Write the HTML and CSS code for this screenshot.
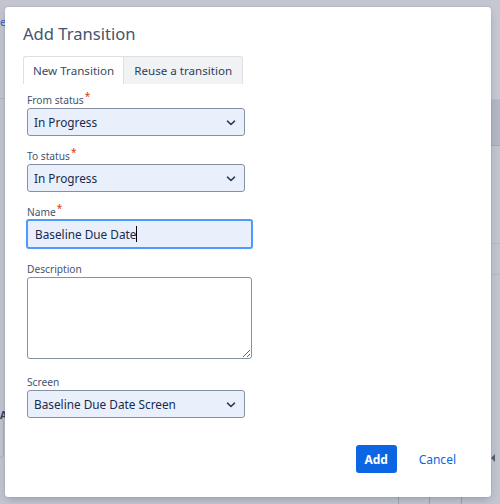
FILE: index.html
```html
<!DOCTYPE html>
<html lang="en">
<head>
<meta charset="utf-8">
<title>Add Transition</title>
<link rel="stylesheet" href="styles.css">
</head>
<body>
<div class="page">
  <div class="page-left">
    <span class="page-link">e</span>
    <div class="page-rule"></div>
    <div class="page-box"></div>
    <span class="page-label">A</span>
  </div>
  <div class="page-right">
    <div class="band band-a"></div>
    <div class="band band-b"></div>
    <div class="band band-c"></div>
    <div class="band band-d"></div>
  </div>
  <div class="page-bottom">
    <span class="col"></span><span class="col"></span><span class="col"></span>
  </div>
</div>

<div class="dialog" role="dialog" aria-labelledby="dlg-title">
  <h2 id="dlg-title" class="dialog-title">Add Transition</h2>

  <div class="tabs">
    <div class="tab tab-active">New Transition</div>
    <div class="tab">Reuse a transition</div>
  </div>

  <form class="form">
    <div class="field">
      <label class="label">From status<span class="req">*</span></label>
      <div class="select">
        <span>In Progress</span>
        <svg class="chev" width="10" height="6" viewBox="0 0 10 6"><path d="M1.5 1.2 5 4.5 8.5 1.2" fill="none" stroke="#2c3e5d" stroke-width="1.6" stroke-linecap="round" stroke-linejoin="round"/></svg>
      </div>
    </div>

    <div class="field">
      <label class="label">To status<span class="req">*</span></label>
      <div class="select">
        <span>In Progress</span>
        <svg class="chev" width="10" height="6" viewBox="0 0 10 6"><path d="M1.5 1.2 5 4.5 8.5 1.2" fill="none" stroke="#2c3e5d" stroke-width="1.6" stroke-linecap="round" stroke-linejoin="round"/></svg>
      </div>
    </div>

    <div class="field">
      <label class="label">Name<span class="req">*</span></label>
      <div class="input input-focus"><span>Baseline Due Date</span><span class="caret"></span></div>
    </div>

    <div class="field">
      <label class="label">Description</label>
      <textarea class="textarea"></textarea>
    </div>

    <div class="field field-screen">
      <label class="label">Screen</label>
      <div class="select">
        <span>Baseline Due Date Screen</span>
        <svg class="chev" width="10" height="6" viewBox="0 0 10 6"><path d="M1.5 1.2 5 4.5 8.5 1.2" fill="none" stroke="#2c3e5d" stroke-width="1.6" stroke-linecap="round" stroke-linejoin="round"/></svg>
      </div>
    </div>
  </form>

  <div class="footer">
    <button class="btn btn-primary" type="button">Add</button>
    <button class="btn btn-link" type="button">Cancel</button>
  </div>
</div>
</body>
</html>
```

FILE: styles.css
```css
* { box-sizing: border-box; }

html, body {
  margin: 0;
  height: 100%;
}

body {
  background: #c2c5cf;
  font-family: "Noto Sans", "Open Sans", sans-serif;
  color: #172b4d;
  overflow: hidden;
}

/* dimmed page behind the dialog */
.page {
  position: relative;
  width: 500px;
  height: 504px;
}

.page-left {
  position: absolute;
  left: 0;
  top: 0;
  width: 5px;
  height: 504px;
}
.page-link {
  position: absolute;
  left: 0;
  top: 14px;
  font-size: 11px;
  color: #3b5fb8;
}
.page-rule {
  position: absolute;
  left: 0;
  top: 98px;
  width: 5px;
  height: 1px;
  background: #aeb3bf;
}
.page-box {
  position: absolute;
  left: -6px;
  top: 418px;
  width: 10px;
  height: 40px;
  border: 1px solid #a7adba;
  border-radius: 4px;
}
.page-label {
  position: absolute;
  left: 0;
  top: 408px;
  font-size: 10px;
  font-weight: bold;
  color: #36405a;
}

.page-right {
  position: absolute;
  left: 491px;
  top: 0;
  width: 9px;
  height: 504px;
  background: #c0c4ce;
}
.band { position: absolute; left: 0; width: 9px; }
.band-a { top: 0; height: 99px; background: #c5c8d2; }
.band-b { top: 99px; height: 47px; background: #b1b7c4; border-bottom: 1px solid #a3aab9; border-top: 1px solid #b9bec9; }
.band-c { top: 243px; height: 32px; border-top: 1px solid #b4b9c5; border-bottom: 1px solid #b4b9c5; }
.band-d { top: 448px; height: 20px; }
.band-d::before {
  content: "";
  position: absolute;
  left: 0;
  top: 6px;
  border-right: 4px solid #566077;
  border-top: 4px solid transparent;
  border-bottom: 4px solid transparent;
}

.page-bottom {
  position: absolute;
  left: 0;
  top: 497px;
  width: 500px;
  height: 7px;
  background: #c3c6d0;
}
.col {
  position: absolute;
  top: 0;
  width: 1px;
  height: 7px;
  background: #9ea4b2;
}
.col:nth-child(1) { left: 398px; }
.col:nth-child(2) { left: 429px; }
.col:nth-child(3) { left: 461px; }

/* modal dialog */
.dialog {
  position: absolute;
  left: 5px;
  top: 7px;
  width: 486px;
  height: 490px;
  background: #fff;
  border-radius: 3px;
  box-shadow: 0 0 1px rgba(9, 30, 66, 0.31), 0 4px 8px -2px rgba(9, 30, 66, 0.25);
  padding: 15px 25px 24px 18px;
  display: flex;
  flex-direction: column;
}

.dialog-title {
  margin: 0;
  font-size: 16.6px;
  font-weight: normal;
  line-height: 24px;
  color: #44546f;
}

.tabs {
  display: flex;
  margin-top: 10px;
  height: 28px;
}
.tab {
  font-size: 11.6px;
  line-height: 28px;
  color: #2c3e5d;
  padding: 0 10px 0 10px;
  border: 1px solid #dcdfe4;
  border-bottom: none;
  background: #f1f2f4;
  border-radius: 0 3px 0 0;
}
.tab-active {
  background: #fff;
  border-right: none;
  border-radius: 3px 0 0 0;
  padding: 0 9px 0 9px;
  color: #3a4a66;
}

.form {
  display: flex;
  flex-direction: column;
  padding: 8px 0 0 4px;
  gap: 12px;
}

.field {
  display: flex;
  flex-direction: column;
  align-items: flex-start;
}
.field-screen { margin-top: 3px; }

.label {
  font-size: 10.2px;
  line-height: 16px;
  color: #44546f;
}
.req {
  color: #de350b;
  font-size: 10px;
  position: relative;
  top: -4px;
  margin-left: 1px;
}

.select {
  width: 218px;
  height: 28px;
  display: flex;
  align-items: center;
  justify-content: space-between;
  padding: 0 8px 0 6px;
  background: #e9f0fc;
  border: 1px solid #8590a2;
  border-radius: 3px;
  font-size: 11.8px;
  color: #172b4d;
}
.chev { display: block; margin-top: 1px; }

.input {
  width: 227px;
  height: 30px;
  margin-left: -1px;
  margin-top: -1px;
  display: flex;
  align-items: center;
  padding: 0 7px;
  background: #e9f0fc;
  border: 2px solid #4c9aff;
  border-radius: 3px;
  font-size: 11.8px;
  color: #172b4d;
}
.caret {
  display: inline-block;
  width: 1px;
  height: 16px;
  background: #000;
  margin-left: 0;
}

.textarea {
  width: 225px;
  height: 82px;
  margin: 0;
  border: 1px solid #8590a2;
  border-radius: 3px;
  background: #fff;
  font-family: inherit;
  display: block;
}

.footer {
  margin-top: auto;
  display: flex;
  justify-content: flex-end;
  gap: 12px;
  align-items: center;
}
.btn {
  font-family: inherit;
  font-size: 12px;
  height: 28px;
  border: none;
  border-radius: 3px;
  cursor: pointer;
}
.btn-primary {
  width: 41px;
  background: #0c66e4;
  color: #fff;
  font-weight: bold;
}
.btn-link {
  background: none;
  color: #0c66e4;
  padding: 0 10px;
}
```
